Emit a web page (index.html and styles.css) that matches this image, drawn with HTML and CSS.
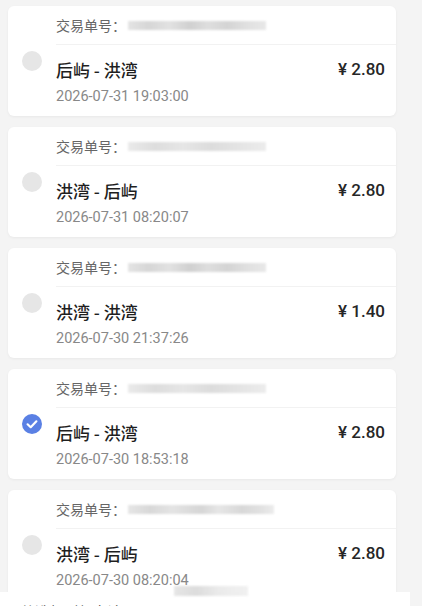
FILE: index.html
```html
<!DOCTYPE html>
<html lang="zh-CN">
<head>
<meta charset="utf-8">
<link rel="stylesheet" href="styles.css">
</head>
<body>
<div class="list">
  <div class="card">
    <div class="radio"><span class="dot"></span></div>
    <div class="content">
      <div class="head"><span class="label">交易单号：</span><span class="blur b1"></span></div>
      <div class="body">
        <div class="row"><span class="route">后屿 - 洪湾</span><span class="price">¥ 2.80</span></div>
        <div class="date">2026-07-31 19:03:00</div>
      </div>
    </div>
  </div>
  <div class="card">
    <div class="radio"><span class="dot"></span></div>
    <div class="content">
      <div class="head"><span class="label">交易单号：</span><span class="blur b2"></span></div>
      <div class="body">
        <div class="row"><span class="route">洪湾 - 后屿</span><span class="price">¥ 2.80</span></div>
        <div class="date">2026-07-31 08:20:07</div>
      </div>
    </div>
  </div>
  <div class="card">
    <div class="radio"><span class="dot"></span></div>
    <div class="content">
      <div class="head"><span class="label">交易单号：</span><span class="blur b1"></span></div>
      <div class="body">
        <div class="row"><span class="route">洪湾 - 洪湾</span><span class="price">¥ 1.40</span></div>
        <div class="date">2026-07-30 21:37:26</div>
      </div>
    </div>
  </div>
  <div class="card">
    <div class="radio"><span class="dot checked"><svg viewBox="0 0 20 20" width="20" height="20"><path d="M5.6 10.3 L8.7 13.2 L14.4 7.3" fill="none" stroke="#fff" stroke-width="2.2" stroke-linecap="round" stroke-linejoin="round"/></svg></span></div>
    <div class="content">
      <div class="head"><span class="label">交易单号：</span><span class="blur b2"></span></div>
      <div class="body">
        <div class="row"><span class="route">后屿 - 洪湾</span><span class="price">¥ 2.80</span></div>
        <div class="date">2026-07-30 18:53:18</div>
      </div>
    </div>
  </div>
  <div class="card">
    <div class="radio"><span class="dot"></span></div>
    <div class="content">
      <div class="head"><span class="label">交易单号：</span><span class="blur b3"></span></div>
      <div class="body">
        <div class="row"><span class="route">洪湾 - 后屿</span><span class="price">¥ 2.80</span></div>
        <div class="date">2026-07-30 08:20:04</div>
      </div>
    </div>
  </div>
</div>
<div class="bottom">
  <span class="smudge"></span>
  <div class="bottom-text">共选择1笔 合计：¥2.80</div>
</div>
</body>
</html>
```
FILE: styles.css
```css
html, body {
  margin: 0;
  padding: 0;
  background: #f4f4f4;
  font-family: Roboto, "Noto Sans CJK SC", sans-serif;
  overflow: hidden;
}
.list {
  padding: 6px 26px 0 8px;
  display: flex;
  flex-direction: column;
  gap: 11px;
}
.card {
  height: 110px;
  background: #fff;
  border-radius: 6px;
  box-shadow: 0 1px 3px rgba(0,0,0,0.05);
  display: flex;
}
.radio {
  width: 48px;
  flex: none;
  display: flex;
  align-items: center;
  padding-left: 14px;
  box-sizing: border-box;
}
.dot {
  width: 20px;
  height: 20px;
  border-radius: 50%;
  background: #e6e6e6;
  display: block;
}
.dot.checked {
  background: #5a80e4;
}
.dot svg { display: block; }
.content {
  flex: 1;
  display: flex;
  flex-direction: column;
}
.head {
  height: 38px;
  display: flex;
  align-items: center;
  border-bottom: 1px solid #f2f2f2;
}
.label {
  font-size: 14px;
  color: #666;
  font-family: "Noto Sans CJK SC", sans-serif;
}
.blur {
  display: block;
  height: 9px;
  margin-left: 2px;
  filter: blur(0.8px);
}
.b1 {
  width: 138px;
  background: linear-gradient(90deg, #e4e4e4 0, #d6d6d6 15%, #e2e2e2 30%, #d0d0d0 45%, #dedede 58%, #d4d4d4 72%, #e0e0e0 86%, #e8e8e8 100%);
}
.b2 {
  width: 138px;
  background: linear-gradient(90deg, #eaeaea 0, #dddddd 20%, #e6e6e6 40%, #dcdcdc 60%, #e4e4e4 80%, #ececec 100%);
}
.b3 {
  width: 146px;
  background: linear-gradient(90deg, #e6e6e6 0, #d8d8d8 15%, #e4e4e4 30%, #d6d6d6 50%, #e6e6e6 62%, #d8d8d8 78%, #e2e2e2 92%, #ececec 100%);
}
.body {
  padding: 13px 11px 0 0;
}
.row {
  display: flex;
  justify-content: space-between;
  align-items: center;
  height: 22px;
}
.route {
  font-size: 17px;
  font-weight: 500;
  color: #1f1f1f;
  font-family: "Noto Sans CJK SC", sans-serif;
}
.price {
  font-size: 17px;
  font-weight: 500;
  color: #262626;
}
.date {
  margin-top: 7px;
  line-height: 20px;
  font-size: 14.5px;
  color: #888;
}
.bottom {
  position: fixed;
  top: 592px;
  left: 0;
  width: 410px;
  height: 60px;
  background: #fff;
}
.smudge {
  position: absolute;
  left: 174px;
  top: -6px;
  width: 74px;
  height: 10px;
  background: linear-gradient(90deg, #e0e0e0, #d4d4d4 30%, #e6e6e6 60%, #eeeeee);
  filter: blur(1.2px);
  opacity: 0.8;
}
.bottom-text {
  padding: 10px 0 0 20px;
  font-size: 15px;
  line-height: 20px;
  color: #333;
  font-family: "Noto Sans CJK SC", sans-serif;
}
```
